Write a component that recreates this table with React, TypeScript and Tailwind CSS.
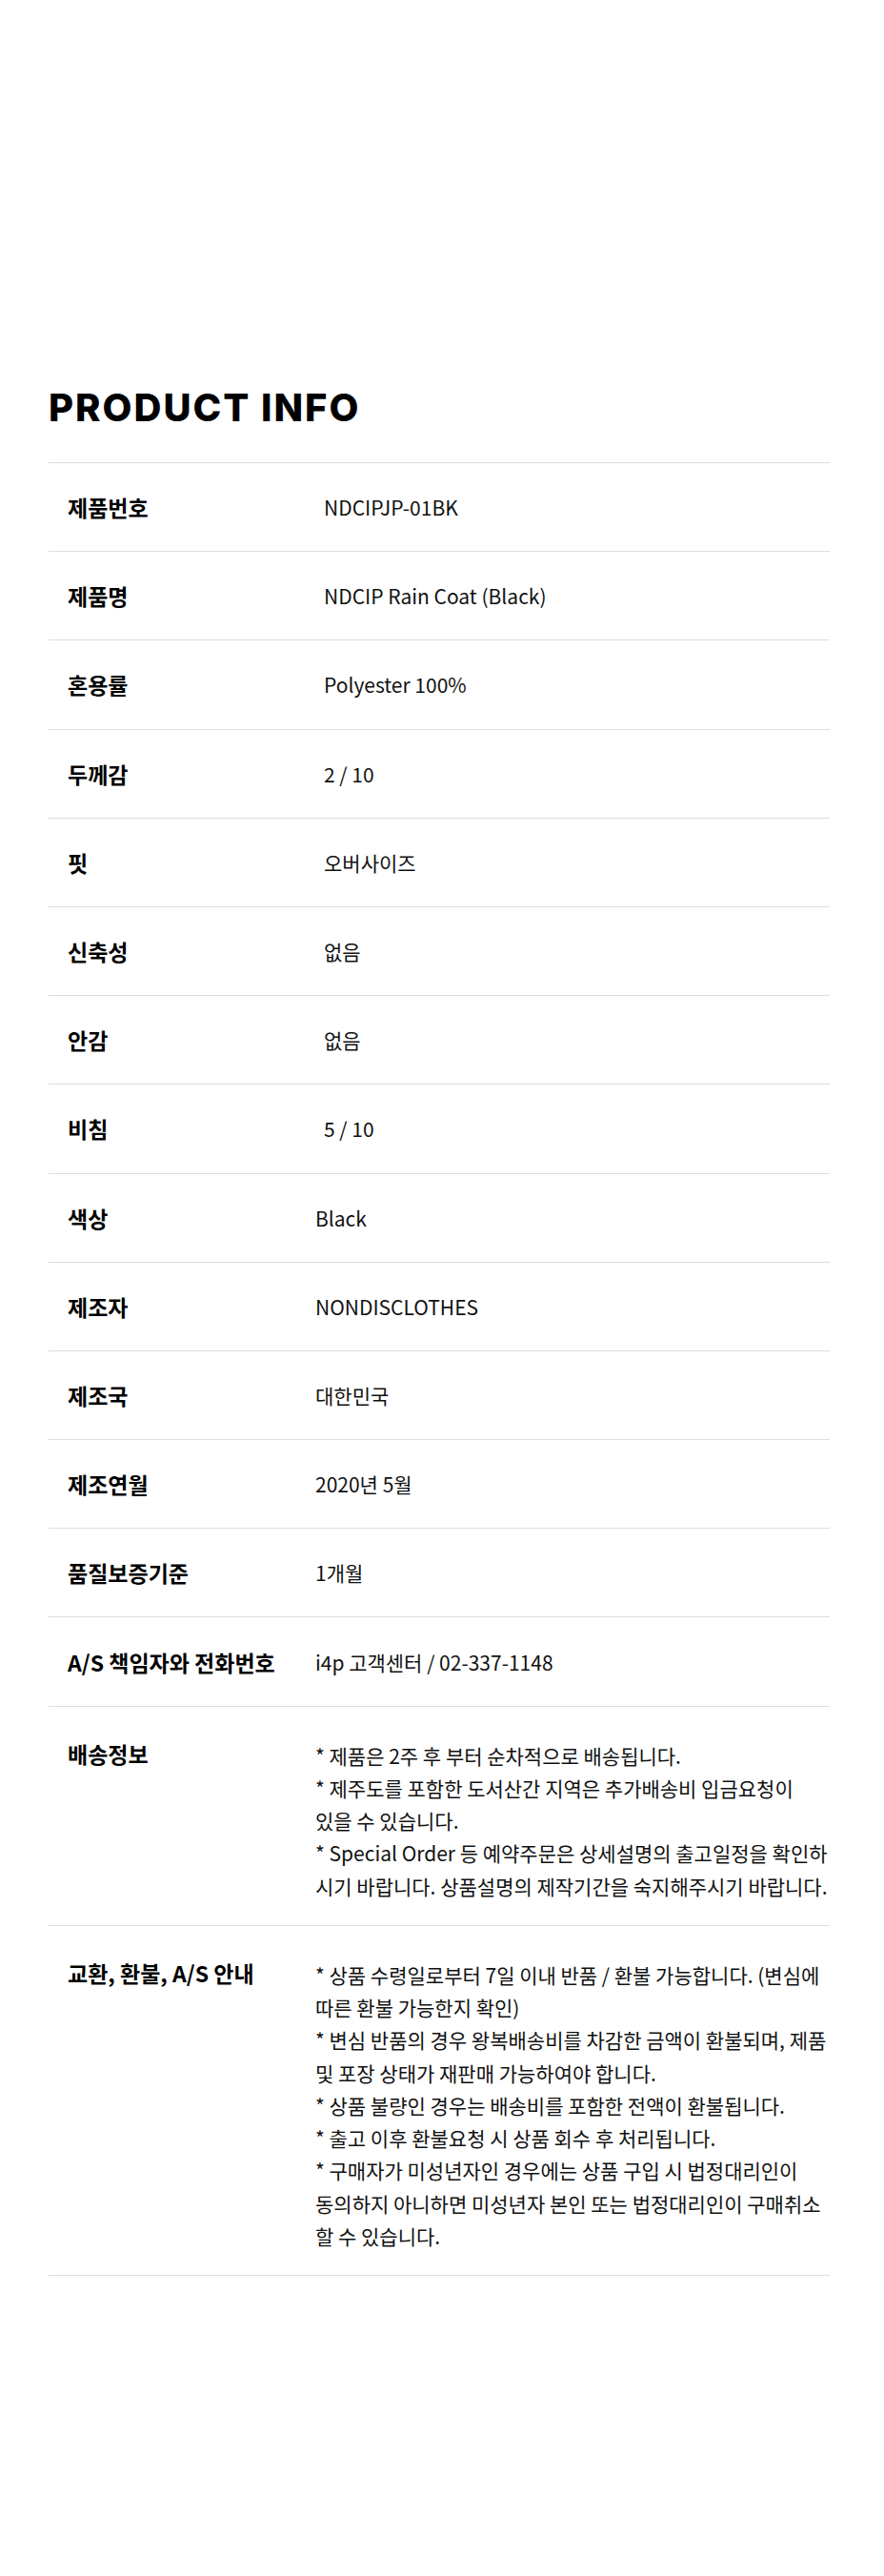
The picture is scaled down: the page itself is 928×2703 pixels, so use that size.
import React from "react";

const FONT = { fontFamily: '"Noto Sans CJK KR", "Noto Sans", sans-serif' };

type Row = { label: string; value: string; shift?: boolean };

const rows: Row[] = [
  { label: "제품번호", value: "NDCIPJP-01BK", shift: true },
  { label: "제품명", value: "NDCIP Rain Coat (Black)", shift: true },
  { label: "혼용률", value: "Polyester 100%", shift: true },
  { label: "두께감", value: "2 / 10", shift: true },
  { label: "핏", value: "오버사이즈", shift: true },
  { label: "신축성", value: "없음", shift: true },
  { label: "안감", value: "없음", shift: true },
  { label: "비침", value: "5 / 10", shift: true },
  { label: "색상", value: "Black" },
  { label: "제조자", value: "NONDISCLOTHES" },
  { label: "제조국", value: "대한민국" },
  { label: "제조연월", value: "2020년 5월" },
  { label: "품질보증기준", value: "1개월" },
  { label: "A/S 책임자와 전화번호", value: "i4p 고객센터 / 02-337-1148" },
];

const shipping = [
  "* 제품은 2주 후 부터 순차적으로 배송됩니다.",
  "* 제주도를 포함한 도서산간 지역은 추가배송비 입금요청이",
  "있을 수 있습니다.",
  "* Special Order 등 예약주문은 상세설명의 출고일정을 확인하",
  "시기 바랍니다. 상품설명의 제작기간을 숙지해주시기 바랍니다.",
];

const refund = [
  "* 상품 수령일로부터 7일 이내 반품 / 환불 가능합니다. (변심에",
  "따른 환불 가능한지 확인)",
  "* 변심 반품의 경우 왕복배송비를 차감한 금액이 환불되며, 제품",
  "및 포장 상태가 재판매 가능하여야 합니다.",
  "* 상품 불량인 경우는 배송비를 포함한 전액이 환불됩니다.",
  "* 출고 이후 환불요청 시 상품 회수 후 처리됩니다.",
  "* 구매자가 미성년자인 경우에는 상품 구입 시 법정대리인이",
  "동의하지 아니하면 미성년자 본인 또는 법정대리인이 구매취소",
  "할 수 있습니다.",
];

export default function App() {
  return (
    <div className="min-h-[2703px] bg-white text-black" style={FONT}>
      <div className="ml-[51px] w-[820px] pt-[408px]">
        <h1
          className="text-[40px] font-extrabold leading-[40px] tracking-[2px] text-black"
          style={{ fontFamily: 'Inter, "Noto Sans", sans-serif' }}
        >
          PRODUCT INFO
        </h1>
        <div className="mt-[37px] border-t border-[#dddddd]">
          {rows.map((r) => (
            <div
              key={r.label}
              className="grid h-[93.2px] grid-cols-[280px_1fr] items-center border-b border-[#dddddd]"
            >
              <div className="pl-[20px] text-[23px] font-bold leading-[32px] text-black">{r.label}</div>
              <div className={"text-[21px] leading-[32px] text-[#111111] " + (r.shift ? "pl-[9px]" : "")}>
                {r.value}
              </div>
            </div>
          ))}
          <div className="grid grid-cols-[280px_1fr] border-b border-[#dddddd] pt-[34px] pb-[24px]">
            <div className="pl-[20px] text-[23px] font-bold leading-[30px] text-black">배송정보</div>
            <div className="text-[21px] leading-[34.25px] text-[#111111]">
              {shipping.map((l, i) => (
                <div key={i} className="whitespace-nowrap">{l}</div>
              ))}
            </div>
          </div>
          <div className="grid grid-cols-[280px_1fr] border-b border-[#dddddd] pt-[34px] pb-[24px]">
            <div className="pl-[20px] text-[23px] font-bold leading-[30px] text-black">교환, 환불, A/S 안내</div>
            <div className="text-[21px] leading-[34.25px] text-[#111111]">
              {refund.map((l, i) => (
                <div key={i} className="whitespace-nowrap">{l}</div>
              ))}
            </div>
          </div>
        </div>
      </div>
    </div>
  );
}
